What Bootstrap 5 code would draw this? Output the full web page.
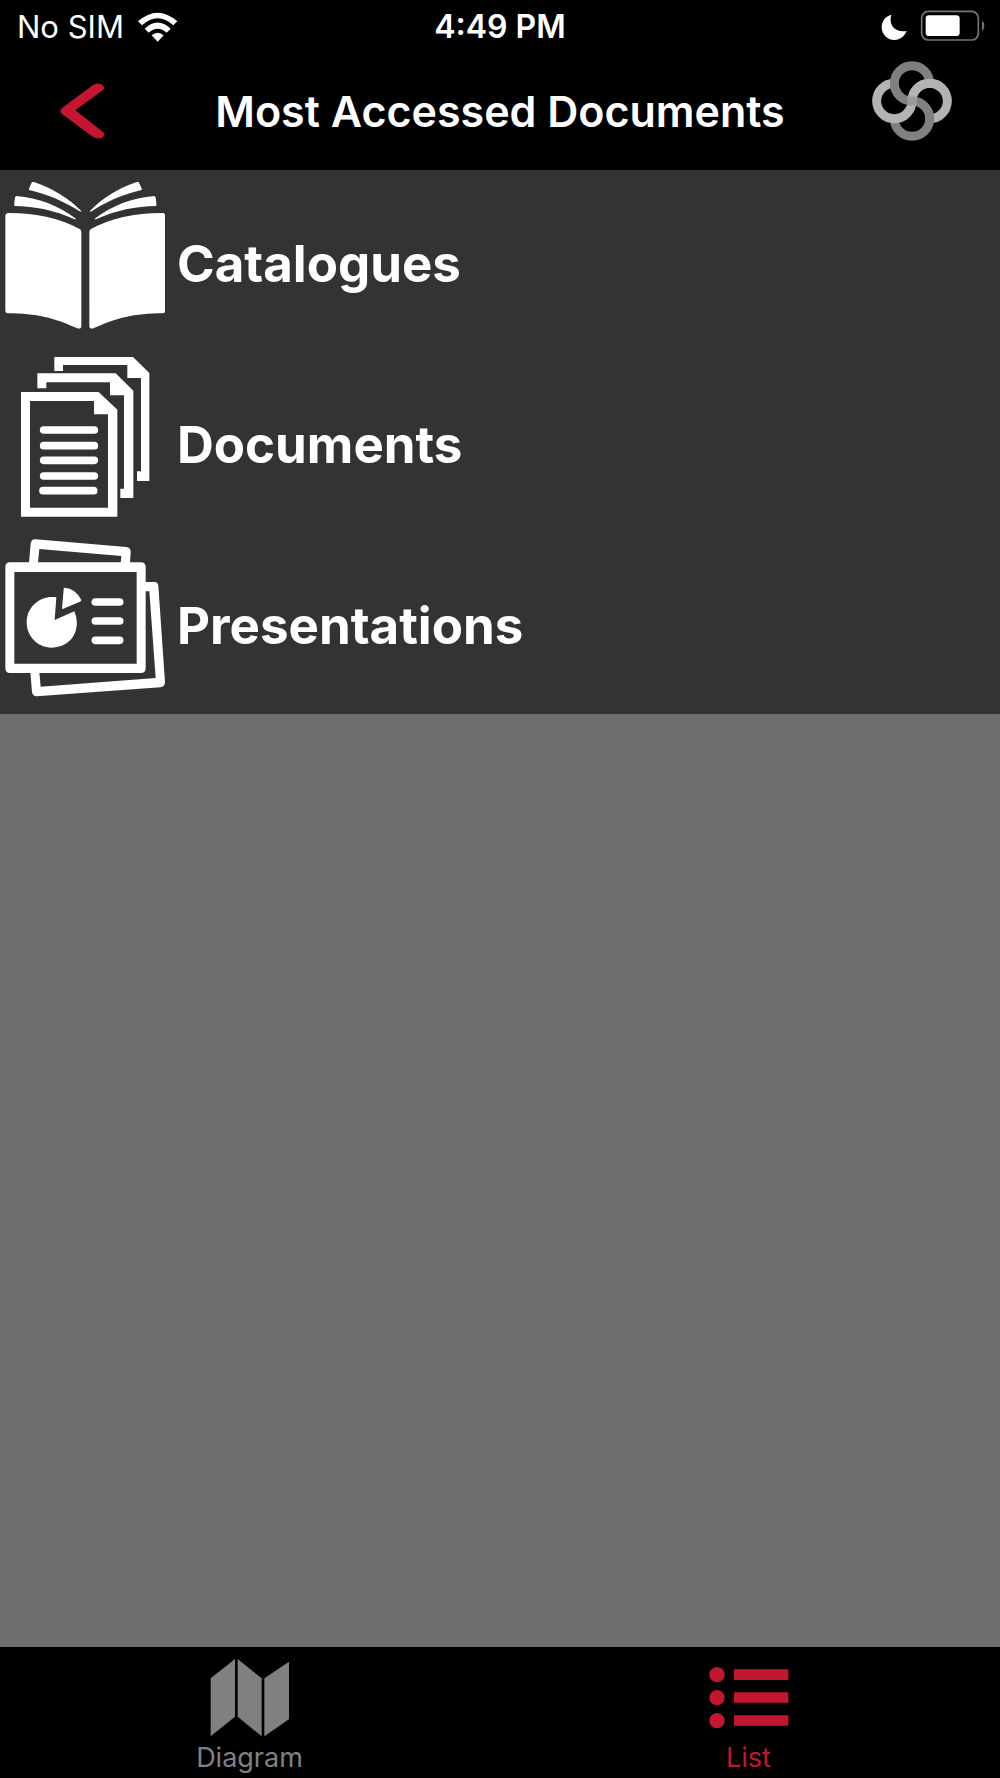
<!DOCTYPE html>
<html lang="en">
<head>
<meta charset="utf-8">
<meta name="viewport" content="width=device-width, initial-scale=1">
<title>Most Accessed Documents</title>
<link href="https://cdn.jsdelivr.net/npm/bootstrap@5.3.0/dist/css/bootstrap.min.css" rel="stylesheet">
<style>
  body { font-family: Inter, "Liberation Sans", sans-serif; background: #6d6e70; color: #fff; }
  svg { display: block; flex: none; }
  .topbar { background: #000; }
  .status { height: 54px; padding: 0 17px; font-size: 31px; line-height: 36px; }
  .status-side { flex: 1 1 0; gap: 14px; }
  .status-time { font-size: 32px; }
  .status-power { margin: 0 -2px 2px 0; }
  .titlebar { height: 116px; padding: 0 48px 2px; }
  .titlebar h1 { font-size: 43px; line-height: 52px; }
  .title-side { flex: 1 1 0; }
  .back-link { padding-left: 12px; }
  .logo-link { padding-top: 7px; }
  .doc-list { background: #333; padding-top: 1px; }
  .doc-item { gap: 12px; padding: 5px 5px 16px; font-size: 51px; line-height: 64px; color: #fff; }
  .doc-item span { padding-top: 16px; }
  .tabs { background: #000; padding-right: 2px; }
  .tab-item { padding: 11px 0 5px; gap: 6px; font-size: 27px; line-height: 30px; color: #808080; }
  .tab-item.active { color: #c4162e; }
</style>
<script src="https://cdn.jsdelivr.net/npm/bootstrap@5.3.0/dist/js/bootstrap.bundle.min.js"></script>
</head>
<body class="d-flex flex-column min-vh-100">
<header class="topbar">
  <div class="status d-flex align-items-center">
    <div class="status-side d-flex align-items-center">
      <span>No SIM</span>
      <svg width="40" height="30" viewBox="414 35 120 90" fill="#fff" aria-hidden="true">
        <path d="M414 63Q473 11 532 63L520 75Q473 33 426 75Z"/>
        <path d="M434 85Q473 48 512 85L500 97Q473 73 446 97Z"/>
        <path d="M455 105Q473 90 491 105L473 124Z"/>
      </svg>
    </div>
    <span class="status-time fw-semibold">4:49 PM</span>
    <div class="status-side d-flex align-items-center justify-content-end">
      <svg class="status-power" width="104" height="32" viewBox="124 30 312 96" aria-hidden="true">
        <path d="M155 44C147 70 160 98 201 93C193 112 178 120 164 120C143 120 126 103 126 82C126 63 138 49 155 44Z" fill="#fff"/>
        <rect x="246" y="34" width="170" height="86" rx="20" fill="none" stroke="#777" stroke-width="5"/>
        <rect x="258" y="46" width="102" height="62" rx="10" fill="#fff"/>
        <path d="M427 62Q434 67 434 77T427 92Z" fill="#777"/>
      </svg>
    </div>
  </div>
  <nav class="titlebar d-flex align-items-center" aria-label="Page">
    <div class="title-side d-flex">
      <a href="#" class="back-link" aria-label="Back">
        <svg width="45" height="56" viewBox="180 251 135 168" aria-hidden="true">
          <path d="M181 335Q181 330 187 325L279 257Q290 249 304 255Q317 263 310 271L226 333L310 399Q317 407 307 415Q292 421 278 412L187 345Q181 340 181 335Z" fill="#c4162e"/>
        </svg>
      </a>
    </div>
    <h1 class="fw-semibold m-0 text-nowrap">Most Accessed Documents</h1>
    <div class="title-side d-flex justify-content-end align-self-start">
      <a href="#" class="logo-link" aria-label="Home">
        <svg width="80" height="80" viewBox="95 182 240 240" fill="none" stroke-width="27" aria-hidden="true">
          <path d="M215 302A53 53 0 1 1 268 355" stroke="#b3b3b3"/>
          <path d="M215 302A53 53 0 1 1 162 355" stroke="#808080"/>
          <path d="M215 302A53 53 0 1 1 162 249" stroke="#b3b3b3"/>
          <path d="M215 302A53 53 0 1 1 268 249" stroke="#808080"/>
          <path d="M215 302A53 53 0 0 1 305 264" stroke="#b3b3b3"/>
          <rect x="202" y="289" width="26" height="26" fill="#999"/>
        </svg>
      </a>
    </div>
  </nav>
</header>

<main class="flex-grow-1">
  <div class="doc-list">
    <a href="#" class="doc-item d-flex align-items-center fw-bold text-decoration-none">
      <svg width="160" height="160" viewBox="15 33 480 480" fill="#fff" aria-hidden="true">
        <path d="M16 153Q16 144 26 144C110 144 180 160 239 192Q244 195 244 202V482Q244 493 232 490C162 459 110 445 24 445Q16 445 16 436Z"/>
        <path d="M496 153Q496 144 486 144C402 144 332 160 273 192Q268 195 268 202V482Q268 493 280 490C350 459 402 445 488 445Q496 445 496 436Z"/>
        <path d="M96 51Q99 50 104 52C158 70 207 101 244 138Q244 142 239 139C194 110 142 87 87 75Q86 73 88 68Z"/>
        <path d="M416 51Q413 50 408 52C354 70 305 101 270 138Q269 142 275 139C318 110 370 87 425 75Q426 73 424 68Z"/>
        <path d="M49 93C116 98 174 122 228 161Q228 164 222 162C164 136 105 124 43 123V112L45 98Q46 93 49 93Z"/>
        <path d="M463 93C396 98 337 122 284 161Q284 164 290 162C348 136 407 124 469 123V112L467 98Q466 93 463 93Z"/>
      </svg>
      <span>Catalogues</span>
    </a>
    <a href="#" class="doc-item d-flex align-items-center fw-bold text-decoration-none">
      <svg width="160" height="160" viewBox="15 36 480 480" fill="#fff" aria-hidden="true">
        <path d="M163 36H399L448 84V408H411V379H423V99H382V60H189V78H163Z"/>
        <path d="M112 85H347L400 137V459H361V431H372V151H330V112H139V130H112Z"/>
        <path fill-rule="evenodd" d="M63 141H296L352 194V515H63ZM90 168V488H324V208H282V168Z"/>
        <path d="M131 255H283M131 302H283M131 346H283M131 393H283M129 437H281" stroke="#fff" stroke-width="23" stroke-linecap="round"/>
      </svg>
      <span>Documents</span>
    </a>
    <a href="#" class="doc-item d-flex align-items-center fw-bold text-decoration-none">
      <svg width="160" height="160" viewBox="15 39 480 480" fill="#fff" aria-hidden="true">
        <path fill-rule="evenodd" d="M30 112H423Q437 112 437 127V430Q437 444 423 444H30Q16 444 16 430V127Q16 112 30 112ZM43 141V416H410V141Z"/>
        <path d="M87 114L92 56Q94 42 107 43L379 66Q393 68 392 82L390 114H362L364 93L118 72L114 114Z"/>
        <path d="M435 171H464Q474 172 475 182L495 471Q495 486 481 487L111 514Q98 514 96 501L91 442H118L122 485L467 459L448 199H435Z"/>
        <path d="M169 217L164 285L223 259C244 309 220 367 155 368C112 368 80 333 80 292C80 242 125 210 169 217Z"/>
        <path d="M193 188Q227 190 244 225Q244 229 240 230L186 253L191 192Q191 188 193 188Z"/>
        <path d="M286 231H359M286 288H359M286 346H359" stroke="#fff" stroke-width="23" stroke-linecap="round"/>
      </svg>
      <span>Presentations</span>
    </a>
  </div>
</main>

<footer class="tabs d-flex">
  <a href="#" class="tab-item d-flex flex-column align-items-center text-decoration-none w-50">
    <svg width="80" height="79" viewBox="88 84 240 237" fill="#808080" aria-hidden="true">
      <path d="M90 145L163 87V260L90 319ZM171 87L243 145V319L171 260ZM251 145L325 95V268L251 319Z"/>
    </svg>
    <span>Diagram</span>
  </a>
  <a href="#" class="tab-item active d-flex flex-column align-items-center text-decoration-none w-50" aria-current="page">
    <svg width="80" height="79" viewBox="88 84 240 237" fill="#c4162e" aria-hidden="true">
      <circle cx="112" cy="134" r="23"/><circle cx="112" cy="203" r="23"/><circle cx="112" cy="272" r="23"/>
      <path d="M163 118H326V150H163ZM163 187H326V218H163ZM163 256H326V287H163Z"/>
    </svg>
    <span>List</span>
  </a>
</footer>
</body>
</html>
